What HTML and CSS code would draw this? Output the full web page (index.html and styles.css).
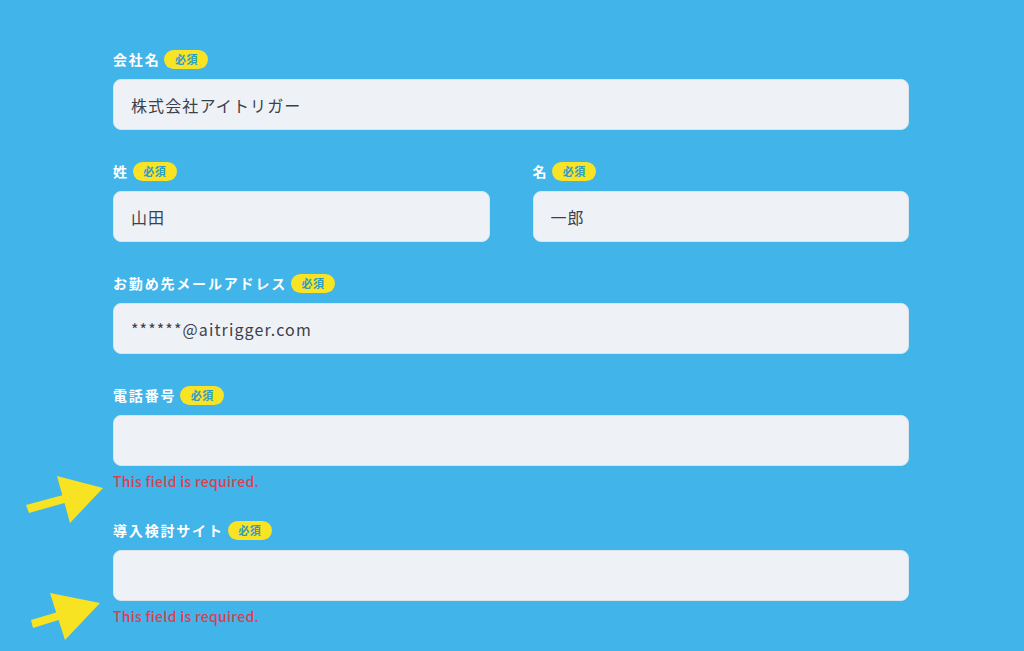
FILE: index.html
```html
<!DOCTYPE html>
<html lang="ja">
<head>
    <meta charset="UTF-8">
    <meta name="viewport" content="width=device-width, initial-scale=1.0">
    <title>お問い合わせフォーム</title>
    <link rel="stylesheet" href="styles.css">
</head>
<body>
    <form class="form">
        <!-- 会社名 -->
        <div class="field">
            <label class="label">会社名<span class="badge">必須</span></label>
            <input class="input" type="text" value="株式会社アイトリガー">
        </div>

        <!-- 氏名 -->
        <div class="row">
            <div class="field">
                <label class="label">姓<span class="badge">必須</span></label>
                <input class="input" type="text" value="山田">
            </div>
            <div class="field">
                <label class="label">名<span class="badge">必須</span></label>
                <input class="input" type="text" value="一郎">
            </div>
        </div>

        <!-- メール -->
        <div class="field">
            <label class="label">お勤め先メールアドレス<span class="badge">必須</span></label>
            <input class="input" type="text" value="******@aitrigger.com">
        </div>

        <!-- 電話番号 -->
        <div class="field has-error">
            <label class="label">電話番号<span class="badge">必須</span></label>
            <input class="input" type="text">
            <p class="error">This field is required.</p>
            <svg class="arrow arrow-1" width="110" height="60" viewBox="0 0 110 60">
                <polygon points="34,0 80,12 47,47 41.5,26.9 6,37 3,29 39.3,19.2"/>
            </svg>
        </div>

        <!-- 導入検討サイト -->
        <div class="field has-error">
            <label class="label">導入検討サイト<span class="badge">必須</span></label>
            <input class="input" type="text">
            <p class="error">This field is required.</p>
            <svg class="arrow arrow-2" width="110" height="60" viewBox="0 0 110 60">
                <polygon points="21,0 71,10 36,47 29.6,27 4,35 2,27 27.2,19.4"/>
            </svg>
        </div>
    </form>
</body>
</html>
```

FILE: styles.css
```css
body {
    margin: 0;
    padding: 0;
    background-color: #41b4e9;
    font-family: "Noto Sans CJK JP", "Noto Sans", sans-serif;
    color: #fff;
}

/* Form */
.form {
    width: 796px;
    margin-left: 113px;
    padding-top: 47px;
}

.field {
    position: relative;
    margin-bottom: 29px;
    flex: 1;
}

.row {
    display: flex;
    gap: 43px;
}

.label {
    display: flex;
    align-items: center;
    height: 24px;
    margin-bottom: 8px;
    font-size: 14px;
    font-weight: bold;
    letter-spacing: 0.13em;
    color: #fff;
}

.badge {
    display: inline-flex;
    align-items: center;
    justify-content: center;
    width: 44px;
    height: 19px;
    margin-left: 4px;
    border-radius: 10px;
    background-color: #f8e325;
    color: #2d9cc6;
    font-size: 11px;
    letter-spacing: 0.05em;
}

.input {
    display: block;
    box-sizing: border-box;
    width: 100%;
    height: 51px;
    padding: 0 17px;
    border: 1px solid #dbe4ec;
    border-radius: 8px;
    background-color: #eef2f6;
    font-family: "Noto Sans CJK JP", "Noto Sans", sans-serif;
    font-size: 16px;
    letter-spacing: 0.07em;
    color: #3b414c;
    outline: none;
}

/* Errors */
.has-error {
    margin-bottom: 28px;
}

.error {
    margin: 6px 0 0;
    font-size: 14px;
    font-weight: 500;
    line-height: 18px;
    letter-spacing: 0.02em;
    color: #de3f4f;
}

/* Annotation arrows */
.arrow {
    position: absolute;
    fill: #f8e322;
}

.arrow-1 {
    left: -90px;
    top: 93px;
}

.arrow-2 {
    left: -84px;
    top: 75px;
}
```
